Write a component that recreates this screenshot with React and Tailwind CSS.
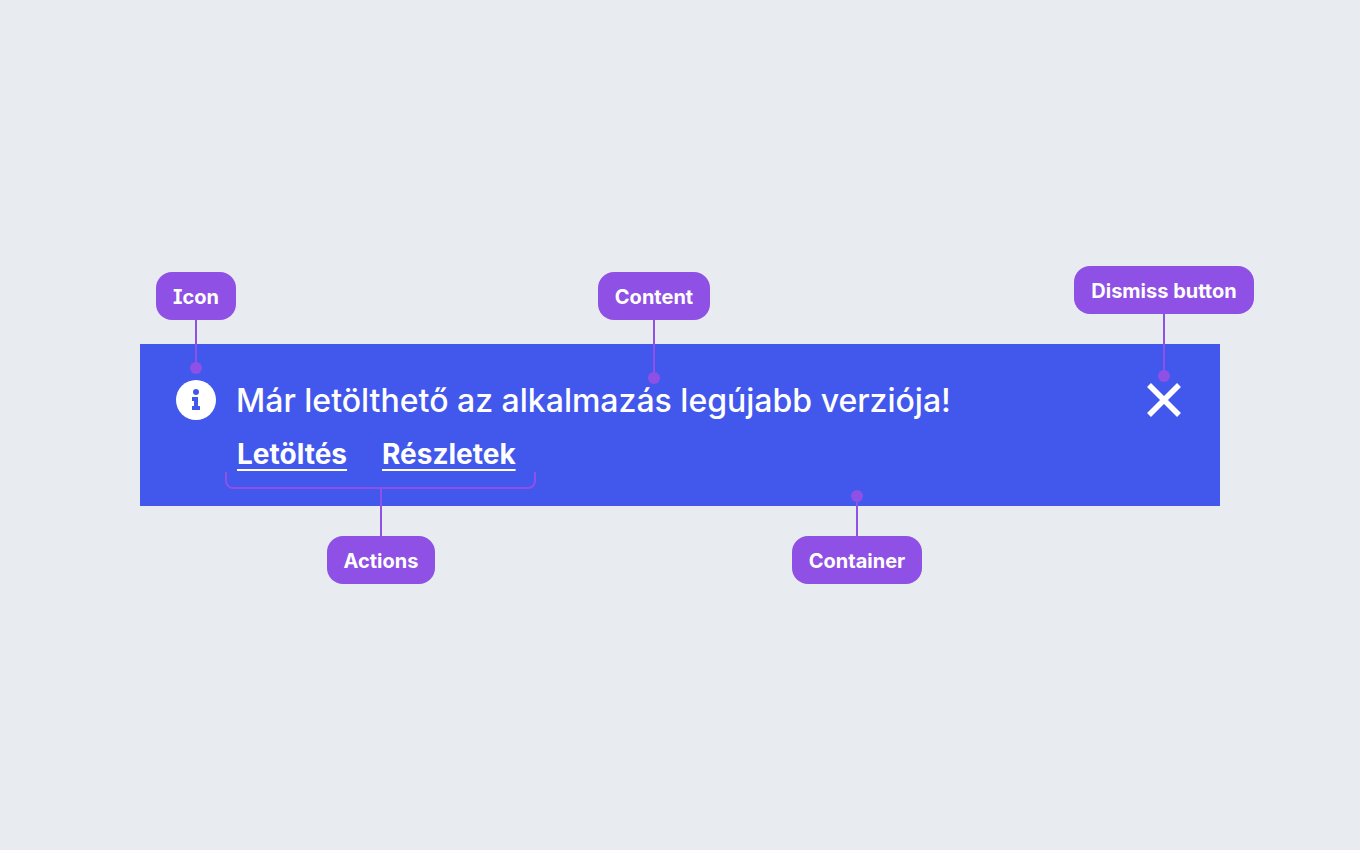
const stemLengths = {
  short: 'h-10',
  medium: 'h-12',
  long: 'h-[58px]',
  tall: 'h-[62px]',
}

function App() {
  return (
    <div className="flex min-h-screen items-center bg-[#e8ecf1] px-8 font-['Inter',sans-serif] antialiased">
      <main className="mx-auto w-full max-w-[1080px]">
        <Banner />
      </main>
    </div>
  )
}

function Banner() {
  return (
    <section className="relative flex items-start gap-5 bg-[#4258ed] px-9 pt-9 pb-8 text-white">
      <div className="relative shrink-0">
        <InfoIcon />
        <Callout label="Icon" stem="medium" className="bottom-13 left-1/2" />
      </div>

      <div className="relative min-w-0 flex-1">
        <p className="text-[32px] leading-[42px] font-medium">Már letölthető az alkalmazás legújabb verziója!</p>
        <div className="relative mt-3 ml-px inline-flex gap-[35px] text-[28px] leading-10 font-bold">
          <ActionLink>Letöltés</ActionLink>
          <ActionLink>Részletek</ActionLink>
          {/* Bracket under the links */}
          <span className="absolute -right-5 -left-3 top-[38px] h-[17px] rounded-b-lg border-2 border-t-0 border-[#8f50e5]" />
          <Callout label="Actions" stem="medium" side="bottom" dot={false} className="top-[54px] left-36" />
        </div>
        <Callout label="Content" stem="long" className="top-[-108px] left-[418px]" />
      </div>

      <div className="relative shrink-0">
        <button type="button" aria-label="Dismiss" className="block size-10 cursor-pointer">
          <CloseIcon />
        </button>
        <Callout label="Dismiss button" stem="tall" className="top-[-114px] left-1/2" />
      </div>

      <Callout label="Container" stem="short" side="bottom" className="bottom-[-78px] left-[717px]" />
    </section>
  )
}

function ActionLink({ children }) {
  return (
    <a href="#" className="underline decoration-2 underline-offset-[5px] [text-decoration-skip-ink:none]">
      {children}
    </a>
  )
}

function Callout({ label, stem, side = 'top', dot = true, className }) {
  return (
    <div
      className={`pointer-events-none absolute flex w-0 items-center ${
        side === 'top' ? 'flex-col' : 'flex-col-reverse'
      } ${className}`}
    >
      <span className="flex h-12 shrink-0 items-center rounded-2xl bg-[#8f50e5] px-[17px] pt-0.5 text-xl leading-6 font-bold whitespace-nowrap text-white [font-feature-settings:'cv08']">
        {label}
      </span>
      <span className={`w-0.5 shrink-0 bg-[#8f50e5] ${stemLengths[stem]}`} />
      {dot && <span className="-my-1.5 size-3 shrink-0 rounded-full bg-[#8f50e5]" />}
    </div>
  )
}

function InfoIcon() {
  return (
    <svg viewBox="0 0 40 40" className="block size-10" aria-hidden="true">
      <circle cx="20" cy="20" r="20" fill="#fff" />
      <circle cx="20" cy="12" r="3" fill="#4258ed" />
      <path d="M16 17h6v9h2v4h-8v-4h2v-5h-2z" fill="#4258ed" />
    </svg>
  )
}

function CloseIcon() {
  return (
    <svg viewBox="0 0 40 40" className="block size-10" aria-hidden="true">
      <path d="M5 5l30 30M35 5l-30 30" stroke="#fff" strokeWidth="5.5" />
    </svg>
  )
}

export default App
